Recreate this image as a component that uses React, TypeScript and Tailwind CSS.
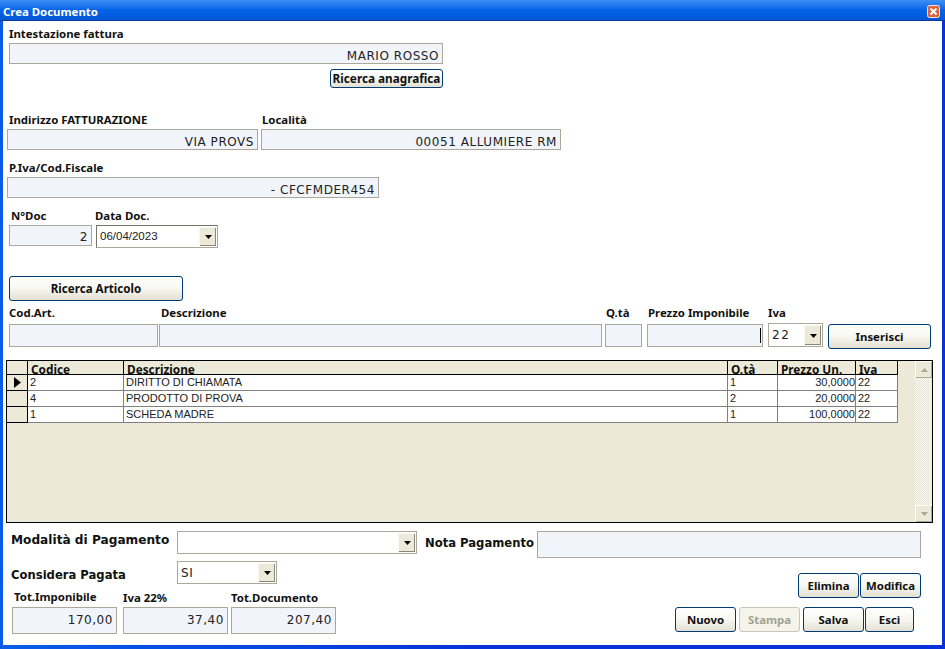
import React from "react";

const lab = "font-['Noto_Sans',sans-serif] font-bold text-[11.4px] leading-[14px] h-[14px] text-[#111] whitespace-nowrap";
const val = "font-['DejaVu_Sans',sans-serif] text-[12px] tracking-[0.55px] text-[#222] whitespace-nowrap";
const big = "font-['DejaVu_Sans',sans-serif] font-bold leading-[16px] text-[#111] whitespace-nowrap";

function Field({ className, text }: { className: string; text?: string }) {
  return (
    <div className={"shrink-0 flex items-center justify-end pr-[3px] border border-[#aca899] bg-[#f1f4fa] " + val + " " + className}>
      {text}
    </div>
  );
}

function Btn({ className, text, disabled }: { className: string; text: string; disabled?: boolean }) {
  return (
    <button
      className={
        "shrink-0 flex items-center justify-center rounded-[3px] border font-['Noto_Sans',sans-serif] font-bold whitespace-nowrap " +
        (disabled
          ? "border-[#c9c7ba] bg-[#f5f4ea] text-[#a1a192] "
          : "border-[#003c74] bg-gradient-to-b from-white via-[#f7f7f2] to-[#e3e0d2] text-[#111] ") +
        className
      }
    >
      {text}
    </button>
  );
}

function Arrow({ className }: { className: string }) {
  return (
    <div className={"shrink-0 flex items-center justify-center bg-[#ece9d8] border-t border-l border-[#f8f7f0] shadow-[inset_-1px_-1px_0_#8a887c] " + className}>
      <svg width="7" height="4" viewBox="0 0 7 4"><path d="M0 0h7L3.5 4z" fill="#000" /></svg>
    </div>
  );
}

function Combo({ className, text, arrow, sunken }: { className: string; text?: string; arrow: string; sunken?: boolean }) {
  return (
    <div
      className={
        "shrink-0 flex items-center justify-between bg-white border border-[#aca899] " +
        (sunken ? "border-t-[#77756a] border-l-[#77756a] " : "") +
        className
      }
    >
      <span className="pl-[3px]">{text}</span>
      <Arrow className={arrow} />
    </div>
  );
}

const rows = [
  ["2", "DIRITTO DI CHIAMATA", "1", "30,0000", "22"],
  ["4", "PRODOTTO DI PROVA", "2", "20,0000", "22"],
  ["1", "SCHEDA MADRE", "1", "100,0000", "22"],
];

const cell = "shrink-0 h-full border-r border-b border-[#808080] pl-[2px] overflow-hidden";

export default function App() {
  return (
    <div className="w-[945px] h-[649px] flex flex-col overflow-hidden bg-gradient-to-r from-[#0a5ce8] via-[#0831d9] to-[#0831d9]">
      <div className="h-[21px] shrink-0 flex items-center justify-between pl-[3px] pr-[5px] bg-gradient-to-b from-[#3d8ff5] via-[#0463e8] to-[#0457d6] border-b border-[#0a3a9a]">
        <span className="pt-[3px] font-['Noto_Sans',sans-serif] font-bold text-[11.4px] text-white">Crea Documento</span>
        <svg className="mt-[2px]" width="13" height="13" viewBox="0 0 13 13">
          <rect x="0.5" y="0.5" width="12" height="12" rx="2" fill="#d8643f" stroke="#f6e6de" />
          <path d="M3.5 3.5l6 6M9.5 3.5l-6 6" stroke="#fff" strokeWidth="2" />
        </svg>
      </div>

      <div className="ml-[3px] w-[939px] h-[624px] shrink-0 bg-white flex flex-col pt-[6px]">
        <div className={"ml-[6px] " + lab}>Intestazione fattura</div>
        <Field className="ml-[6px] mt-[2px] w-[434px] h-[21px] pt-[4px]" text="MARIO ROSSO" />
        <Btn className="ml-[327px] mt-[5px] w-[113px] h-[19px] text-[11.75px]" text="Ricerca anagrafica" />

        <div className="flex mt-[25px]">
          <div className={"ml-[6px] w-[253px] " + lab}>Indirizzo FATTURAZIONE</div>
          <div className={lab}>Località</div>
        </div>
        <div className="flex mt-[2px] ml-[4px] gap-[3px]">
          <Field className="w-[251px] h-[21px] pt-[4px]" text="VIA PROVS" />
          <Field className="w-[300px] h-[21px] pt-[4px]" text="00051 ALLUMIERE RM" />
        </div>

        <div className={"ml-[6px] mt-[11px] " + lab}>P.Iva/Cod.Fiscale</div>
        <Field className="ml-[4px] mt-[2px] w-[372px] h-[21px] pt-[4px]" text="- CFCFMDER454" />

        <div className="flex mt-[11px]">
          <div className={"ml-[8px] w-[84px] " + lab}>N°Doc</div>
          <div className={lab}>Data Doc.</div>
        </div>
        <div className="flex items-start mt-[2px] ml-[6px] gap-[4px]">
          <Field className="w-[83px] h-[21px] pt-[3px]" text="2" />
          <Combo
            className="w-[122px] h-[23px] font-['Liberation_Sans',sans-serif] text-[11.5px] text-[#222]"
            text="06/04/2023"
            arrow="w-[17px] h-[19px] mr-[1px]"
            sunken
          />
        </div>

        <Btn className="ml-[6px] mt-[28px] w-[174px] h-[25px] pt-[1px] text-[11.6px]" text="Ricerca Articolo" />

        <div className="flex mt-[5px]">
          <div className={"ml-[6px] w-[152px] " + lab}>Cod.Art.</div>
          <div className={"w-[445px] " + lab}>Descrizione</div>
          <div className={"w-[42px] " + lab}>Q.tà</div>
          <div className={"w-[120px] " + lab}>Prezzo Imponibile</div>
          <div className={lab}>Iva</div>
        </div>
        <div className="flex items-start mt-[3px] ml-[6px]">
          <Field className="mt-[1px] w-[149px] h-[23px]" />
          <Field className="mt-[1px] ml-[1px] w-[443px] h-[23px]" />
          <Field className="mt-[1px] ml-[3px] w-[37px] h-[23px]" />
          <div className="mt-[1px] ml-[5px] w-[116px] h-[23px] shrink-0 flex items-center justify-end pr-[1px] border border-[#aca899] bg-[#f1f4fa]">
            <div className="w-[1px] h-[15px] bg-black" />
          </div>
          <Combo
            className="ml-[5px] w-[55px] h-[24px] font-['DejaVu_Sans',sans-serif] text-[12px] tracking-[1.5px] text-[#222]"
            text="22"
            arrow="w-[17px] h-[20px] mr-[1px]"
          />
          <Btn className="mt-[1px] ml-[5px] w-[103px] h-[25px] text-[11.4px]" text="Inserisci" />
        </div>

        <div className="mt-[11px] ml-[3px] w-[927px] h-[163px] shrink-0 flex border border-black bg-[#ece9d8] font-['Liberation_Sans',sans-serif] text-[11px] text-[#222] leading-[15px]">
          <div className="flex-1 flex flex-col">
            <div className="flex h-[14px] w-[891px] border-b border-black shrink-0 font-['Noto_Sans',sans-serif] font-bold text-[11.8px] leading-[16px] text-[#111]">
              <div className="w-[21px] h-full border-r border-black shrink-0" />
              <div className="w-[96px] h-full border-r border-black shrink-0 pl-[3px]">Codice</div>
              <div className="w-[604px] h-full border-r border-black shrink-0 pl-[3px]">Descrizione</div>
              <div className="w-[50px] h-full border-r border-black shrink-0 pl-[3px]">Q.tà</div>
              <div className="w-[78px] h-full border-r border-black shrink-0 pl-[3px]">Prezzo Un.</div>
              <div className="w-[42px] h-full border-r border-black shrink-0 pl-[3px]">Iva</div>
            </div>
            {rows.map((r, i) => (
              <div key={i} className="flex h-[16px] w-[891px] shrink-0 bg-white">
                <div className="w-[21px] h-full shrink-0 bg-[#ece9d8] border-r border-b border-black flex items-center justify-center">
                  {i === 0 && (
                    <svg width="7" height="11" viewBox="0 0 7 11"><path d="M0 0l7 5.5L0 11z" fill="#000" /></svg>
                  )}
                </div>
                <div className={"w-[96px] " + cell}>{r[0]}</div>
                <div className={"w-[604px] " + cell}>{r[1]}</div>
                <div className={"w-[50px] " + cell}>{r[2]}</div>
                <div className={"w-[78px] text-right pr-[0px] " + cell}>{r[3]}</div>
                <div className={"w-[42px] " + cell}>{r[4]}</div>
              </div>
            ))}
          </div>
          <div className="w-[17px] shrink-0 flex flex-col justify-between bg-[repeating-conic-gradient(#fbfaf6_0_25%,#e6e3d2_0_50%)] bg-[length:2px_2px]">
            <div className="h-[17px] bg-[#ece9d8] border-t border-l border-white shadow-[inset_-1px_-1px_0_#aca899] flex items-center justify-center">
              <svg width="7" height="4" viewBox="0 0 7 4"><path d="M3.5 0L7 4H0z" fill="#aca899" /></svg>
            </div>
            <div className="h-[17px] bg-[#ece9d8] border-t border-l border-white shadow-[inset_-1px_-1px_0_#aca899] flex items-center justify-center">
              <svg width="7" height="4" viewBox="0 0 7 4"><path d="M0 0h7L3.5 4z" fill="#aca899" /></svg>
            </div>
          </div>
        </div>

        <div className="flex items-start mt-[8px] ml-[8px] h-[27px] shrink-0">
          <div className={"w-[166px] mt-[1px] text-[12.15px] " + big}>Modalità di Pagamento</div>
          <Combo className="w-[240px] h-[23px]" arrow="w-[17px] h-[19px] mr-[1px]" />
          <div className={"ml-[8px] w-[112px] mt-[4px] text-[11.6px] " + big}>Nota Pagamento</div>
          <Field className="w-[384px] h-[27px]" />
        </div>

        <div className="flex justify-between mt-[3px] shrink-0">
          <div className="flex flex-col">
            <div className="flex items-start ml-[8px] h-[23px]">
              <div className={"w-[166px] mt-[6px] text-[11.6px] " + big}>Considera Pagata</div>
              <Combo className="w-[100px] h-[23px] font-['DejaVu_Sans',sans-serif] text-[12px] tracking-[0.65px] text-[#222]" text="SI" arrow="w-[17px] h-[19px] mr-[1px]" />
            </div>
            <div className="flex mt-[6px]">
              <div className={"ml-[11px] w-[109px] " + lab}>Tot.Imponibile</div>
              <div className={"w-[108px] mt-[1px] " + lab}>Iva 22%</div>
              <div className={"mt-[1px] " + lab}>Tot.Documento</div>
            </div>
            <div className="flex mt-[2px] ml-[9px] gap-[6px] h-[27px]">
              <Field className="w-[105px] h-[27px] pb-[2px]" text="170,00" />
              <Field className="w-[105px] h-[27px] pb-[2px]" text="37,40" />
              <Field className="-ml-[3px] w-[105px] h-[27px] pb-[2px]" text="207,40" />
            </div>
          </div>
          <div className="flex flex-col items-end pt-[12px] pr-[21px]">
            <div className="flex gap-[1px]">
              <Btn className="w-[61px] h-[25px] pt-[1px] text-[11.4px]" text="Elimina" />
              <Btn className="w-[61px] h-[25px] pt-[1px] text-[11.4px]" text="Modifica" />
            </div>
            <div className="flex mt-[9px] mr-[7px]">
              <Btn className="w-[61px] h-[25px] pt-[1px] text-[11.4px]" text="Nuovo" />
              <Btn className="ml-[3px] w-[61px] h-[25px] pt-[1px] text-[11.4px]" text="Stampa" disabled />
              <Btn className="ml-[3px] w-[61px] h-[25px] pt-[1px] text-[11.4px]" text="Salva" />
              <Btn className="ml-[1px] w-[49px] h-[25px] pt-[1px] text-[11.4px]" text="Esci" />
            </div>
          </div>
        </div>
      </div>
    </div>
  );
}
